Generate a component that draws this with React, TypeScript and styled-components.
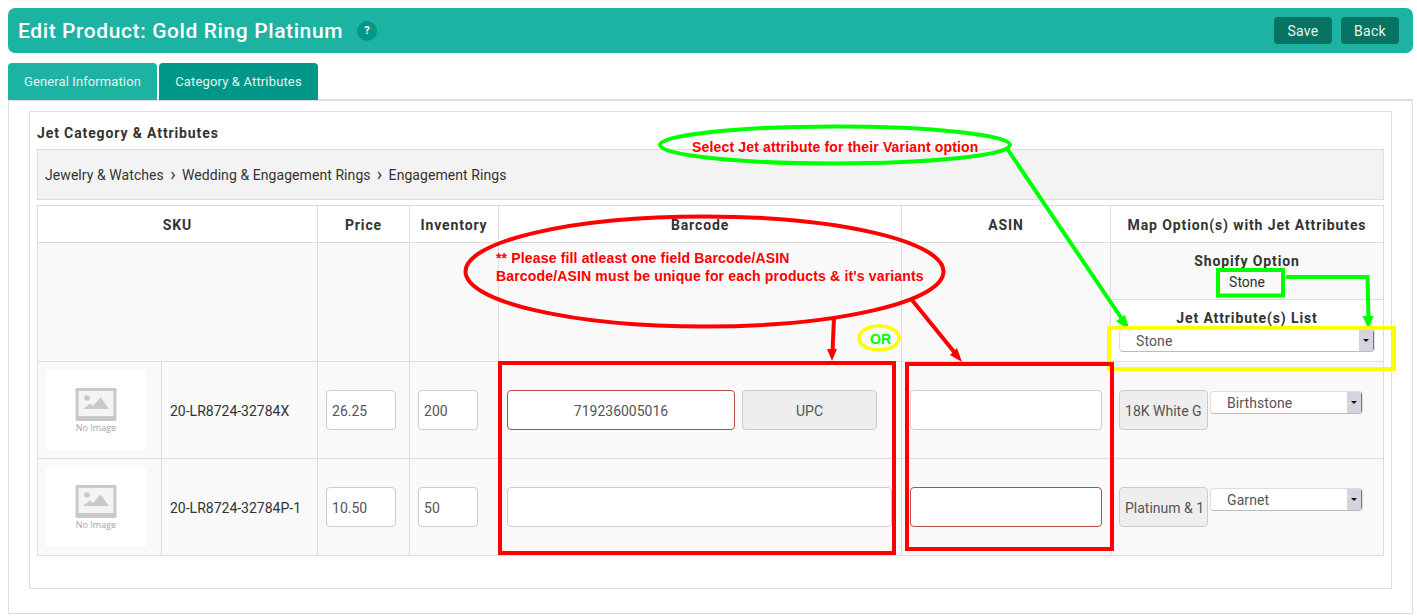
import React from 'react';
import styled, { createGlobalStyle } from 'styled-components';

const GlobalStyle = createGlobalStyle`
  html, body {
    margin: 0;
    padding: 0;
    background: #fff;
    font-family: Roboto, "Liberation Sans", sans-serif;
    color: #333;
  }
  * { box-sizing: border-box; }
`;

const Page = styled.div`
  position: relative;
  width: 1417px;
  height: 616px;
  padding: 8px 4px 0 8px;
  overflow: hidden;
`;

const TopLine = styled.div`
  position: absolute;
  top: 0;
  left: 10px;
  right: 6px;
  height: 1px;
  background: #f6f6f6;
`;

const Header = styled.header`
  display: flex;
  align-items: center;
  height: 45px;
  padding: 0 14px 0 10px;
  background: #1cb3a3;
  border-radius: 7px;
`;

const PageTitle = styled.h1`
  margin: 0;
  padding-top: 1px;
  font-size: 21px;
  font-weight: 500;
  line-height: 45px;
  letter-spacing: 0.6px;
  color: #fff;
`;

const HelpBadge = styled.span`
  display: flex;
  align-items: center;
  justify-content: center;
  width: 20px;
  height: 20px;
  margin-left: 14px;
  border-radius: 50%;
  background: #009688;
  color: #fff;
  font-size: 11px;
  font-weight: 700;
`;

const HeaderActions = styled.div`
  display: flex;
  gap: 9px;
  margin-left: auto;
`;

const HeaderButton = styled.button`
  width: 58px;
  height: 27px;
  padding: 0;
  border: 0;
  border-radius: 4px;
  background: #087263;
  color: #e6f5f2;
  font-family: inherit;
  font-size: 14px;
  letter-spacing: 0.3px;
`;

const Tabs = styled.nav`
  display: flex;
  gap: 2px;
  margin-top: 10px;
  height: 37px;
  position: relative;
`;

const Tab = styled.div<{ $active?: boolean }>`
  display: flex;
  align-items: center;
  justify-content: center;
  width: ${props => (props.$active ? '159px' : '149px')};
  border-radius: 4px 4px 0 0;
  background: ${props => (props.$active ? '#009688' : '#1cb3a3')};
  color: #e4f5f2;
  font-size: 13px;
  letter-spacing: ${props => (props.$active ? '0.15px' : '0.1px')};
`;

const TabPanel = styled.section`
  height: 515px;
  margin-top: -1px;
  padding: 10px 20px 24px 20px;
  border: 1px solid #ddd;
  border-top-width: 2px;
`;

const InnerPanel = styled.div`
  height: 478px;
  padding: 0 7px;
  border: 1px solid #ddd;
`;

const SectionTitle = styled.h2`
  margin: 0;
  height: 37px;
  font-size: 14px;
  font-weight: 700;
  line-height: 43px;
  letter-spacing: 0.88px;
  color: #333;
`;

const Breadcrumb = styled.div`
  display: flex;
  align-items: center;
  height: 51px;
  padding: 0 7px;
  background: #f3f3f3;
  border: 1px solid #ddd;
  font-size: 14px;
  letter-spacing: 0.07px;
  color: #333;
`;

const Crumb = styled.span`
  & + &::before {
    content: '›';
    display: inline-block;
    width: 18px;
    text-align: center;
    font-size: 18px;
    line-height: 14px;
  }
`;

const ProductTable = styled.table`
  width: 1346px;
  margin-top: 5px;
  border-collapse: collapse;
  table-layout: fixed;
`;

const HeadCell = styled.th`
  height: 37px;
  padding: 1px 0 0;
  border: 1px solid #ddd;
  background: #fff;
  font-size: 14px;
  font-weight: 700;
  letter-spacing: 0.88px;
  color: #333;
`;

const SubHeadCell = styled.td`
  padding: 0;
  height: 119px;
  border: 1px solid #ddd;
  background: #f9f9f9;
`;

const BodyCell = styled.td<{ $top?: boolean }>`
  height: 97px;
  padding: ${props => (props.$top ? '28px 0 0 8px' : '0 8px')};
  vertical-align: ${props => (props.$top ? 'top' : 'middle')};
  border: 1px solid #ddd;
  background: #f9f9f9;
  font-size: 14px;
  color: #333;
`;

const ThumbCell = styled(BodyCell)`
  padding: 0 8px;
`;

const SkuCell = styled(BodyCell)`
  padding-top: 2px;
`;

const OptionBlock = styled.div`
  height: 57px;
  padding-top: 9px;
  text-align: center;
  font-size: 14px;
  line-height: 20px;
  border-bottom: 1px solid #ddd;
`;

const OptionLabel = styled.div`
  margin-bottom: 2px;
  font-size: 14px;
  font-weight: 700;
  letter-spacing: 0.88px;
  line-height: 18px;
`;

const AttributeBlock = styled.div`
  height: 61px;
  padding: 9px 8px 0 8px;
  background: #fff;
  text-align: center;
`;

const Thumb = styled.div`
  display: flex;
  flex-direction: column;
  align-items: center;
  justify-content: flex-start;
  width: 100px;
  height: 80px;
  padding-top: 18px;
  background: #fff;
`;

const NoImageText = styled.span`
  margin-top: 1px;
  font-family: "Open Sans", sans-serif;
  font-size: 9px;
  line-height: 11px;
  color: #a4a4a4;
`;

const TextInput = styled.input<{ $error?: boolean; $center?: boolean; $width: number }>`
  display: block;
  width: ${props => props.$width}px;
  height: 40px;
  padding: 2px 5px 0;
  border: 1px solid ${props => (props.$error ? '#b94a48' : '#ccc')};
  border-radius: 4px;
  background: #fff;
  color: #555;
  font-family: inherit;
  font-size: 14px;
  text-align: ${props => (props.$center ? 'center' : 'left')};
  outline: none;
`;

const AddOn = styled.div<{ $width: number; $center?: boolean }>`
  flex: none;
  width: ${props => props.$width}px;
  height: 40px;
  padding: 0 5px;
  white-space: nowrap;
  line-height: 40px;
  border: 1px solid #ccc;
  border-radius: 4px;
  background: #eee;
  color: #555;
  font-size: 14px;
  text-align: ${props => (props.$center ? 'center' : 'left')};
`;

const InputRow = styled.div`
  display: flex;
  gap: 7px;
`;

const OptionRow = styled.div`
  display: flex;
  align-items: flex-start;
  gap: 2px;
`;

const SelectBox = styled.div<{ $width: number }>`
  display: flex;
  flex: none;
  width: ${props => props.$width}px;
  height: 23px;
  margin-top: 1px;
  padding-left: 16px;
  align-items: center;
  justify-content: space-between;
  overflow: hidden;
  border: 1px solid #ddd;
  border-bottom-color: #bbb;
  border-radius: 4px;
  background: #fff;
  color: #555;
  font-size: 14px;
  letter-spacing: 0.1px;
  text-align: left;
`;

const SelectArrow = styled.span`
  display: flex;
  align-items: center;
  justify-content: center;
  width: 15px;
  height: 23px;
  background: #d4d4de;
  border-right: 1px solid #777;
  border-bottom: 1px solid #999;

  &::after {
    content: '';
    width: 0;
    height: 0;
    border-left: 3px solid transparent;
    border-right: 3px solid transparent;
    border-top: 3px solid #111;
  }
`;

const Overlay = styled.div`
  position: absolute;
  inset: 0;
  pointer-events: none;
`;

const OverlayShapes = styled.svg`
  position: absolute;
  top: 0;
  left: 0;
`;

const Note = styled.div<{ $x: number; $y: number; $color?: string }>`
  position: absolute;
  left: ${props => props.$x}px;
  top: ${props => props.$y}px;
  font-family: "Liberation Sans", Arial, sans-serif;
  font-size: 14px;
  font-weight: 700;
  line-height: 18px;
  letter-spacing: 0.16px;
  white-space: nowrap;
  color: ${props => props.$color || '#ff0000'};
`;

const NoImageIcon = () => (
  <svg width="42" height="33" viewBox="0 0 42 33">
    <rect x="0.5" width="41" height="33" rx="1.5" fill="#c9c9c9" />
    <rect x="3.5" y="3" width="35" height="25" fill="#f4f4f4" />
    <circle cx="12" cy="10" r="2.8" fill="#c9c9c9" />
    <path d="M8 21l7-5.5 3 2.5 7.5-8.5L34 21z" fill="#c9c9c9" />
  </svg>
);

const Annotations = () => (
  <Overlay>
    <OverlayShapes width="1417" height="616" viewBox="0 0 1417 616" fill="none">
      <ellipse cx="835" cy="145" rx="175" ry="18.5" stroke="#00ff00" strokeWidth="4" />
      <path d="M1006 147L1124 322" stroke="#00ff00" strokeWidth="4" />
      <path d="M1130 331l-14-10 9-6z" fill="#00ff00" />
      <rect x="1218" y="270" width="65" height="25.5" stroke="#00ff00" strokeWidth="4" />
      <path d="M1286 277H1367.5L1368.5 318" stroke="#00ff00" strokeWidth="4" />
      <path d="M1368.5 329l-6-13h11z" fill="#00ff00" />
      <rect x="1109" y="328" width="285" height="41" stroke="#ffff00" strokeWidth="4" />

      <ellipse cx="704.5" cy="271.5" rx="239" ry="55" stroke="#ff0000" strokeWidth="4" />
      <path d="M834 318L832.5 352" stroke="#ff0000" strokeWidth="4" />
      <path d="M832 361l-5-12h10z" fill="#ff0000" />
      <path d="M912 300L955 353" stroke="#ff0000" strokeWidth="4" />
      <path d="M962 362l-12-7 7-7z" fill="#ff0000" />
      <ellipse cx="879" cy="338" rx="20" ry="12" stroke="#ffff00" strokeWidth="3.5" />
      <rect x="500" y="363" width="394" height="190" stroke="#ff0000" strokeWidth="4" />
      <rect x="907" y="364" width="205" height="185" stroke="#ff0000" strokeWidth="4" />
    </OverlayShapes>
    <Note $x={692} $y={138}>Select Jet attribute for their Variant option</Note>
    <Note $x={496} $y={249}>** Please fill atleast one field Barcode/ASIN</Note>
    <Note $x={496} $y={267}>Barcode/ASIN must be unique for each products &amp; it's variants</Note>
    <Note $x={870} $y={330} $color="#00ff00">OR</Note>
  </Overlay>
);

const variants = [
  {
    sku: '20-LR8724-32784X',
    price: '26.25',
    inventory: '200',
    barcode: '719236005016',
    type: 'UPC',
    asinError: false,
    option: '18K White G',
    attribute: 'Birthstone',
  },
  {
    sku: '20-LR8724-32784P-1',
    price: '10.50',
    inventory: '50',
    barcode: '',
    type: '',
    asinError: true,
    option: 'Platinum & 1',
    attribute: 'Garnet',
  },
];

const App: React.FC = () => (
  <Page>
    <GlobalStyle />
    <TopLine />
    <Header>
      <PageTitle>Edit Product: Gold Ring Platinum</PageTitle>
      <HelpBadge>?</HelpBadge>
      <HeaderActions>
        <HeaderButton>Save</HeaderButton>
        <HeaderButton>Back</HeaderButton>
      </HeaderActions>
    </Header>

    <Tabs>
      <Tab>General Information</Tab>
      <Tab $active>Category &amp; Attributes</Tab>
    </Tabs>

    <TabPanel>
      <InnerPanel>
        <SectionTitle>Jet Category &amp; Attributes</SectionTitle>
        <Breadcrumb>
          <Crumb>Jewelry &amp; Watches</Crumb>
          <Crumb>Wedding &amp; Engagement Rings</Crumb>
          <Crumb>Engagement Rings</Crumb>
        </Breadcrumb>

        <ProductTable>
          <colgroup>
            <col width="124" />
            <col width="156" />
            <col width="92" />
            <col width="89" />
            <col width="403" />
            <col width="209" />
            <col width="273" />
          </colgroup>
          <thead>
            <tr>
              <HeadCell colSpan={2}>SKU</HeadCell>
              <HeadCell>Price</HeadCell>
              <HeadCell>Inventory</HeadCell>
              <HeadCell>Barcode</HeadCell>
              <HeadCell>ASIN</HeadCell>
              <HeadCell>Map Option(s) with Jet Attributes</HeadCell>
            </tr>
          </thead>
          <tbody>
            <tr>
              <SubHeadCell colSpan={2} />
              <SubHeadCell />
              <SubHeadCell />
              <SubHeadCell />
              <SubHeadCell />
              <SubHeadCell>
                <OptionBlock>
                  <OptionLabel>Shopify Option</OptionLabel>
                  Stone
                </OptionBlock>
                <AttributeBlock>
                  <OptionLabel>Jet Attribute(s) List</OptionLabel>
                  <SelectBox $width={256}>
                    Stone
                    <SelectArrow />
                  </SelectBox>
                </AttributeBlock>
              </SubHeadCell>
            </tr>
            {variants.map(variant => (
              <tr key={variant.sku}>
                <ThumbCell>
                  <Thumb>
                    <NoImageIcon />
                    <NoImageText>No Image</NoImageText>
                  </Thumb>
                </ThumbCell>
                <SkuCell>{variant.sku}</SkuCell>
                <BodyCell>
                  <TextInput $width={70} defaultValue={variant.price} />
                </BodyCell>
                <BodyCell>
                  <TextInput $width={60} defaultValue={variant.inventory} />
                </BodyCell>
                <BodyCell>
                  {variant.type ? (
                    <InputRow>
                      <TextInput $width={228} $center $error defaultValue={variant.barcode} />
                      <AddOn $width={135} $center>{variant.type}</AddOn>
                    </InputRow>
                  ) : (
                    <TextInput $width={385} />
                  )}
                </BodyCell>
                <BodyCell>
                  <TextInput $width={192} $error={variant.asinError} />
                </BodyCell>
                <BodyCell $top>
                  <OptionRow>
                    <AddOn $width={89}>{variant.option}</AddOn>
                    <SelectBox $width={153}>
                      {variant.attribute}
                      <SelectArrow />
                    </SelectBox>
                  </OptionRow>
                </BodyCell>
              </tr>
            ))}
          </tbody>
        </ProductTable>
      </InnerPanel>
    </TabPanel>

    <Annotations />
  </Page>
);

export default App;
